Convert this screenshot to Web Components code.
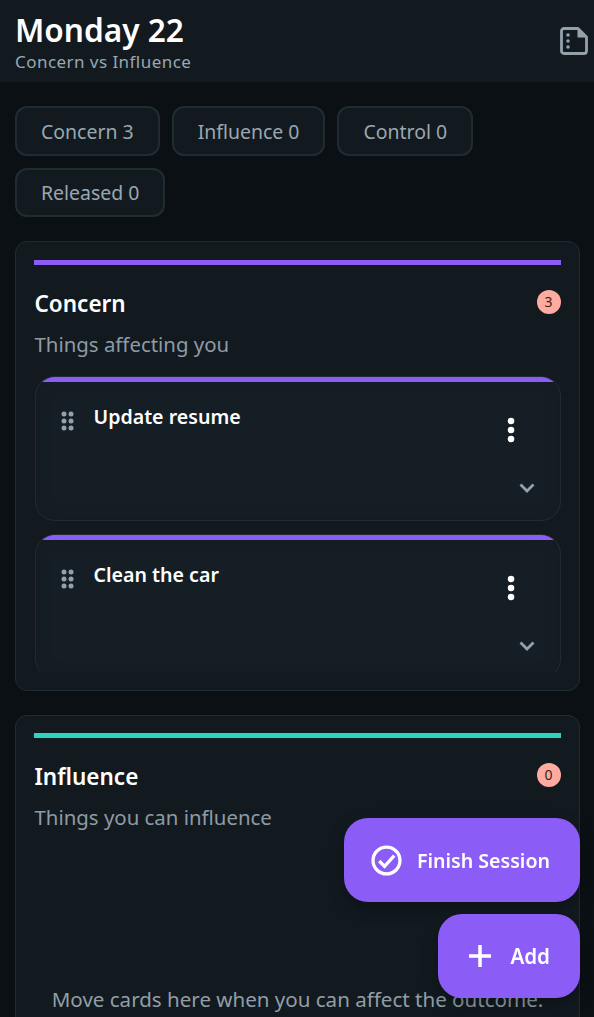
<!DOCTYPE html>
<html lang="en">
<head>
<meta charset="utf-8">
<title>Monday 22</title>
<style>
html, body { margin: 0; height: 100%; overflow: hidden; background: #0b1014; }
body { font-family: "Noto Sans", "Open Sans", sans-serif; color: #fff; }
</style>
</head>
<body>
<session-screen>
  <session-header slot="header" title="Monday 22" subtitle="Concern vs Influence"></session-header>
  <filter-chip>Concern 3</filter-chip>
  <filter-chip>Influence 0</filter-chip>
  <filter-chip>Control 0</filter-chip>
  <filter-chip>Released 0</filter-chip>
  <zone-section slot="zones" title="Concern" hint="Things affecting you" count="3" accent="#8b5cf6">
    <task-card>Update resume</task-card>
    <task-card>Clean the car</task-card>
  </zone-section>
  <zone-section slot="zones" title="Influence" hint="Things you can influence" count="0" accent="#2dd4bf" empty="Move cards here when you can affect the outcome."></zone-section>
  <fab-button slot="fabs" icon="check">Finish Session</fab-button>
  <fab-button slot="fabs" icon="plus">Add</fab-button>
</session-screen>

<script>
class SessionScreen extends HTMLElement {
  constructor() {
    super();
    this.attachShadow({ mode: "open" });
    this.shadowRoot.innerHTML = `
<style>
:host { display: block; height: 100vh; overflow: hidden; position: relative; }
.chips { display: flex; flex-wrap: wrap; gap: 12px; padding: 24px 15px 24px; }
.zones { display: flex; flex-direction: column; gap: 24px; padding: 0 14px 0 15px; }
.fabs { position: fixed; right: 14px; bottom: 19px; display: flex; flex-direction: column; align-items: flex-end; gap: 12px; }
</style>
<slot name="header"></slot>
<div class="chips"><slot></slot></div>
<div class="zones"><slot name="zones"></slot></div>
<div class="fabs"><slot name="fabs"></slot></div>`;
  }
}

class SessionHeader extends HTMLElement {
  constructor() {
    super();
    this.attachShadow({ mode: "open" });
    this.shadowRoot.innerHTML = `
<style>
:host { display: flex; justify-content: space-between; align-items: center; height: 82px; box-sizing: border-box; padding: 1px 6px 0 15px; background: #121a20; }
h1 { margin: 0; font-size: 31.600px; line-height: 38px; font-weight: 600; }
p { margin: 1px 0 0; font-size: 17px; line-height: 23px; color: #9aa7b0; letter-spacing: .45px; }
svg { display: block; margin-top: -2px; }
</style>
<div>
  <h1>${this.getAttribute("title")}</h1>
  <p>${this.getAttribute("subtitle")}</p>
</div>
<svg width="28" height="30" viewBox="0 0 28 30">
  <path d="M4 2.5H18L26.5 11V25A2.5 2.5 0 0 1 24 27.5H4A2.5 2.5 0 0 1 1.500 25V5A2.500 2.500 0 0 1 4 2.500Z" fill="none" stroke="#93a1ab" stroke-width="2.800" stroke-linejoin="round"/>
  <path d="M17.500 3V11.500H26Z" fill="#93a1ab"/>
  <circle cx="8" cy="9" r="1.800" fill="#93a1ab"/>
  <circle cx="8" cy="15" r="1.800" fill="#93a1ab"/>
  <circle cx="8" cy="21" r="1.800" fill="#93a1ab"/>
</svg>`;
  }
}

class FilterChip extends HTMLElement {
  constructor() {
    super();
    this.attachShadow({ mode: "open" });
    this.shadowRoot.innerHTML = `
<style>
:host { display: flex; align-items: center; height: 49.500px; box-sizing: border-box; padding: 1px 24px 0; background: #121a20; border: 2px solid #1f2c34; border-radius: 12px; color: #9aa7b0; font-size: 19.470px; }
</style>
<slot></slot>`;
  }
}

class ZoneSection extends HTMLElement {
  constructor() {
    super();
    this.attachShadow({ mode: "open" });
    const accent = this.getAttribute("accent");
    const empty = this.getAttribute("empty");
    this.shadowRoot.innerHTML = `
<style>
:host { display: block; box-sizing: border-box; background: #121a20; border: 1.500px solid #1f2c34; border-radius: 12px; padding: 17.500px 18.500px 18px 17.500px; }
.bar { height: 5px; background: ${accent}; }
.head { display: flex; justify-content: space-between; align-items: flex-start; margin-top: 25px; }
h2 { margin: -1px 0 0 1px; font-size: 22.500px; line-height: 30px; font-weight: 600; }
.count { width: 24px; height: 24px; border-radius: 50%; background: #ffab9f; color: #3a1d1a; font-size: 14px; line-height: 24px; text-align: center; }
p { margin: 10px 0 0 1px; font-size: 20.400px; line-height: 30px; color: #8e9ba5; }
.list { height: 296px; overflow: hidden; margin: 17px 0 0; padding: 0 0 0 1px; display: flex; flex-direction: column; gap: 13px; }
.empty { margin: 152px 0 0 1px; text-align: center; font-size: 20.550px; line-height: 30px; color: #929ea6; }
</style>
<div class="bar"></div>
<div class="head"><h2>${this.getAttribute("title")}</h2><span class="count">${this.getAttribute("count")}</span></div>
<p>${this.getAttribute("hint")}</p>
${empty ? `<div class="empty">${empty}</div>` : `<div class="list"><slot></slot></div>`}`;
  }
}

class TaskCard extends HTMLElement {
  constructor() {
    super();
    this.attachShadow({ mode: "open" });
    this.shadowRoot.innerHTML = `
<style>
:host { display: block; flex: none; position: relative; height: 145px; box-sizing: border-box; background: #151e25; border: 1.500px solid #1f2c34; border-radius: 20px; overflow: hidden; padding: 27px 20px 0 25px; box-shadow: inset 0 0 14px rgba(18,26,32,.6); }
:host::before { content: ""; position: absolute; left: 0; right: 0; top: 0; height: 5px; background: #8b5cf6; }
.row { display: flex; align-items: flex-start; }
.grip { display: block; margin-top: 7px; }
.title { margin-left: 20px; flex: 1; font-size: 19.600px; line-height: 26px; font-weight: 600; }
.more { display: block; margin: 13px 25px 0 0; }
.chev { position: absolute; right: 25px; top: 105px; display: block; }
</style>
<div class="row">
  <svg class="grip" width="13" height="20" viewBox="0 0 13 20" fill="#94a1ab">
    <circle cx="3" cy="3" r="2.500"/><circle cx="10" cy="3" r="2.500"/>
    <circle cx="3" cy="10" r="2.500"/><circle cx="10" cy="10" r="2.500"/>
    <circle cx="3" cy="17" r="2.500"/><circle cx="10" cy="17" r="2.500"/>
  </svg>
  <div class="title"><slot></slot></div>
  <svg class="more" width="8" height="26" viewBox="0 0 8 26" fill="#fff">
    <circle cx="4" cy="4" r="3.300"/><circle cx="4" cy="13" r="3.300"/><circle cx="4" cy="22" r="3.300"/>
  </svg>
</div>
<svg class="chev" width="16" height="12" viewBox="0 0 16 12"><path d="M1.500 2.500L8 9L14.500 2.500" fill="none" stroke="#94a1ab" stroke-width="2.800"/></svg>`;
  }
}

const fabIcons = {
  check: `<svg style="margin:0 0 0 1px" width="31" height="31" viewBox="0 0 32 32" fill="none" stroke="#fff" stroke-width="3.400"><circle cx="16" cy="16" r="13.900"/><path d="M8.500 16.500L14 22L24 11"/></svg>`,
  plus: `<svg style="margin:0 4px 0 5px" width="22" height="22" viewBox="0 0 24 24" stroke="#fff" stroke-width="3.800"><path d="M12 0V24M0 12H24"/></svg>`,
};

class FabButton extends HTMLElement {
  constructor() {
    super();
    this.attachShadow({ mode: "open" });
    this.shadowRoot.innerHTML = `
<style>
:host { display: flex; align-items: center; gap: 15px; height: 84px; box-sizing: border-box; padding: 0 30px 0 26px; background: #8b5cf6; border-radius: 24px; color: #fff; font-size: 19.600px; font-weight: 600; box-shadow: 0 6px 16px rgba(0,0,0,.3); }
:host([icon="plus"]) { font-size: 20.600px; }
svg { display: block; flex: none; }
</style>
${fabIcons[this.getAttribute("icon")]}<slot></slot>`;
  }
}

customElements.define("session-screen", SessionScreen);
customElements.define("session-header", SessionHeader);
customElements.define("filter-chip", FilterChip);
customElements.define("zone-section", ZoneSection);
customElements.define("task-card", TaskCard);
customElements.define("fab-button", FabButton);
</script>
</body>
</html>
